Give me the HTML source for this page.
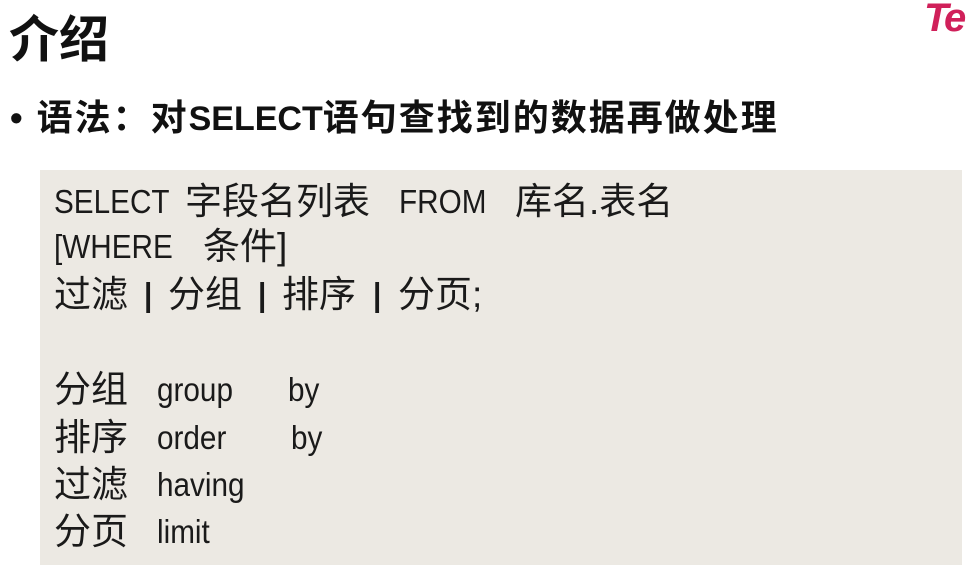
<!DOCTYPE html>
<html><head><meta charset="utf-8"><style>
body{margin:0;width:974px;height:588px;background:#fff;overflow:hidden;position:relative;font-family:"Liberation Sans","Noto Sans CJK SC",sans-serif;}
.t{position:absolute;white-space:pre;color:#111;}
#title{left:9px;top:10px;font-size:50px;font-weight:bold;line-height:60px;}
#bul{left:10px;top:95px;font-size:36px;font-weight:bold;line-height:46px;letter-spacing:2px;}
#box{position:absolute;left:40px;top:170px;width:922px;height:395px;background:#ece9e3;}
.s{position:absolute;white-space:pre;color:#1a1a1a;line-height:40px;height:40px;}
.c{font-size:37px;}
.a{font-size:33px;transform:scaleX(0.9);transform-origin:0 0;}
#logo{position:absolute;left:924px;top:-4px;font-size:40px;font-weight:bold;font-style:italic;color:#d0205a;letter-spacing:-3px;}
</style></head><body>
<div id="logo">Te</div>
<div class="t" id="title">介绍</div>
<div class="t" id="bul">• 语法：对<span style="font-size:34px;letter-spacing:0">SELECT</span>语句查找到的数据再做处理</div>
<div id="box"></div>

<div class="s a" style="left:54px;top:182px">SELECT</div>
<div class="s c" style="left:185px;top:182px">字段名列表</div>
<div class="s a" style="left:399px;top:182px">FROM</div>
<div class="s c" style="left:515px;top:182px">库名.表名</div>

<div class="s a" style="left:54px;top:227px">[WHERE</div>
<div class="s c" style="left:203px;top:227px">条件]</div>

<div class="s c" style="left:54px;top:275px">过滤</div>
<div class="s a" style="left:144px;top:275px;font-weight:bold">|</div>
<div class="s c" style="left:168px;top:275px">分组</div>
<div class="s a" style="left:258px;top:275px;font-weight:bold">|</div>
<div class="s c" style="left:282px;top:275px">排序</div>
<div class="s a" style="left:373px;top:275px;font-weight:bold">|</div>
<div class="s c" style="left:398px;top:275px">分页;</div>

<div class="s c" style="left:54px;top:370px">分组</div>
<div class="s a" style="left:157px;top:370px">group</div>
<div class="s a" style="left:288px;top:370px">by</div>

<div class="s c" style="left:54px;top:418px">排序</div>
<div class="s a" style="left:157px;top:418px">order</div>
<div class="s a" style="left:291px;top:418px">by</div>

<div class="s c" style="left:54px;top:465px">过滤</div>
<div class="s a" style="left:157px;top:465px">having</div>

<div class="s c" style="left:54px;top:512px">分页</div>
<div class="s a" style="left:157px;top:512px">limit</div>
</body></html>
